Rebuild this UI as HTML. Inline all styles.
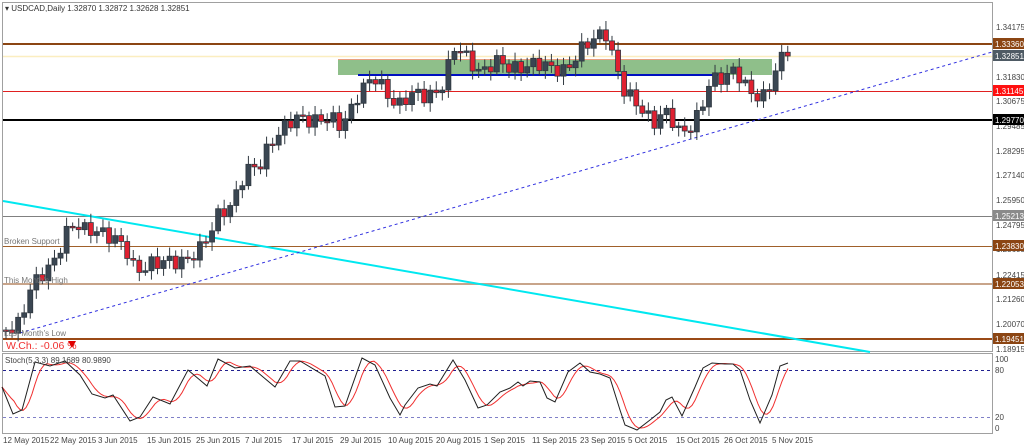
<!DOCTYPE html>
<html><head><meta charset="utf-8"><style>
html,body{margin:0;padding:0;background:#fff;width:1024px;height:447px;overflow:hidden}
svg{display:block;font-family:"Liberation Sans",sans-serif}
</style></head><body>
<svg id="s" width="1024" height="447" viewBox="0 0 1024 447" xmlns="http://www.w3.org/2000/svg">
<rect x="0" y="0" width="1024" height="447" fill="#fff"/>
<rect x="2.5" y="2.5" width="990" height="349" fill="none" stroke="#a0a0a0"/>
<rect x="2.5" y="353.5" width="990" height="80" fill="none" stroke="#a0a0a0"/>
<rect x="338" y="59" width="434" height="16" fill="#8fbf8a"/>
<line x1="338" y1="59.5" x2="724" y2="59.5" stroke="#e8a080" stroke-width="1"/>
<line x1="358" y1="75" x2="718" y2="75" stroke="#0010c0" stroke-width="2"/>
<line x1="3" y1="44" x2="992" y2="44" stroke="#8b4513" stroke-width="2"/>
<line x1="3" y1="56.5" x2="992" y2="56.5" stroke="#fbeec0" stroke-width="1.5"/>
<line x1="3" y1="91.5" x2="992" y2="91.5" stroke="#e02020" stroke-width="1"/>
<line x1="3" y1="120" x2="992" y2="120" stroke="#000" stroke-width="2"/>
<line x1="3" y1="216.5" x2="992" y2="216.5" stroke="#808080" stroke-width="1"/>
<line x1="3" y1="246.5" x2="992" y2="246.5" stroke="#a0602a" stroke-width="1"/>
<line x1="3" y1="284" x2="992" y2="284" stroke="#c8a48a" stroke-width="2"/>
<line x1="3" y1="339" x2="992" y2="339" stroke="#9a4a16" stroke-width="2"/>
<line x1="3" y1="201" x2="870" y2="352" stroke="#00e8f0" stroke-width="2"/>
<line x1="20" y1="333" x2="992" y2="52" stroke="#3030e0" stroke-width="1" stroke-dasharray="3,3"/>
<g id="candles"></g>
<text x="5" y="11" font-size="8" fill="#333">▾ USDCAD,Daily  1.32870 1.32872 1.32628 1.32851</text>
<text x="4" y="244" font-size="8" fill="#777">Broken Support</text>
<text x="4" y="283" font-size="8" fill="#777">This Month's High</text>
<text x="4" y="336" font-size="8" fill="#777">Last Month's Low</text>
<text x="6" y="349" font-size="10.5" fill="#f03030">W.Ch.: -0.06 %</text>
<polygon points="68,341 76,341 72,348" fill="#e00000"/>
<g font-size="8" fill="#444">
<text x="996" y="30">1.34175</text>
<text x="996" y="80">1.31830</text>
<text x="996" y="104">1.30675</text>
<text x="996" y="129">1.29485</text>
<text x="996" y="154">1.28295</text>
<text x="996" y="178">1.27140</text>
<text x="996" y="203">1.25950</text>
<text x="996" y="228">1.24795</text>
<text x="996" y="252">1.23605</text>
<text x="996" y="278">1.22415</text>
<text x="996" y="302">1.21260</text>
<text x="996" y="327">1.20070</text>
<text x="996" y="352">1.18915</text>
</g>
<g font-size="8" fill="#fff">
<rect x="993" y="38" width="31" height="11" fill="#8b4513"/><text x="995" y="47">1.33360</text>
<rect x="993" y="50" width="31" height="11" fill="#4e5a64"/><text x="995" y="59">1.32851</text>
<rect x="993" y="85" width="31" height="11" fill="#ff1010"/><text x="995" y="94">1.31145</text>
<rect x="993" y="114" width="31" height="11" fill="#000"/><text x="995" y="123">1.29770</text>
<rect x="993" y="210" width="31" height="11" fill="#8a8a8a"/><text x="995" y="219">1.25213</text>
<rect x="993" y="240" width="31" height="11" fill="#8b4513"/><text x="995" y="249">1.23830</text>
<rect x="993" y="278" width="31" height="11" fill="#8b4513"/><text x="995" y="287">1.22053</text>
<rect x="993" y="333" width="31" height="11" fill="#8b4513"/><text x="995" y="342">1.19451</text>
</g>
<line x1="3" y1="370.5" x2="992" y2="370.5" stroke="#202090" stroke-dasharray="3,3"/>
<line x1="3" y1="417.5" x2="992" y2="417.5" stroke="#8080c8" stroke-dasharray="3,3"/>
<g id="stoch"></g>
<text x="5" y="363" font-size="8" fill="#444">Stoch(5,3,3) 89.1689 80.9890</text>
<g font-size="8" fill="#444">
<text x="995" y="362">100</text><text x="995" y="373">80</text><text x="995" y="420">20</text><text x="995" y="431">0</text>
</g>
<g font-size="8" fill="#444">
<text x="3" y="443">12 May 2015</text>
<text x="50" y="443">22 May 2015</text>
<text x="98" y="443">3 Jun 2015</text>
<text x="147" y="443">15 Jun 2015</text>
<text x="196" y="443">25 Jun 2015</text>
<text x="245" y="443">7 Jul 2015</text>
<text x="292" y="443">17 Jul 2015</text>
<text x="340" y="443">29 Jul 2015</text>
<text x="388" y="443">10 Aug 2015</text>
<text x="436" y="443">20 Aug 2015</text>
<text x="484" y="443">1 Sep 2015</text>
<text x="532" y="443">11 Sep 2015</text>
<text x="580" y="443">23 Sep 2015</text>
<text x="628" y="443">5 Oct 2015</text>
<text x="676" y="443">15 Oct 2015</text>
<text x="724" y="443">26 Oct 2015</text>
<text x="772" y="443">5 Nov 2015</text>
</g>
</svg>
<script>
(function(){
function interp(k,x){for(var i=0;i<k.length-1;i++){if(x<=k[i+1][0]){var a=k[i],b=k[i+1];return a[1]+(b[1]-a[1])*(x-a[0])/(b[0]-a[0]);}}return k[k.length-1][1];}
var K=[[6,330],[20,320],[30,290],[40,280],[55,258],[65,232],[75,226],[85,232],[100,228],[110,236],[125,250],[135,270],[150,262],[160,265],[175,262],[185,258],[200,250],[210,236],[220,210],[230,205],[245,175],[260,165],[270,140],[285,128],[300,118],[315,118],[330,120],[340,128],[350,110],[360,88],[375,80],[390,98],[400,102],[410,95],[425,98],[440,88],[455,48],[465,58],[480,70],[495,62],[510,70],[530,62],[550,70],[565,68],[580,52],[595,40],[605,28],[615,62],[625,95],[640,108],[655,120],[665,112],[680,135],[690,125],[700,110],[710,84],[725,78],[735,65],[745,85],[755,100],[765,98],[772,78],[780,55],[788,56]];
var g=document.getElementById('candles'),h='';
var prev=330;
for(var i=0;i<=129;i++){
 var x=6+i*6.06;
 var c=interp(K,x)+Math.sin(i*2.3)*7+Math.sin(i*0.9)*3;
 if(i==129)c=56;
 var o=prev, top=Math.min(o,c), bot=Math.max(o,c);
 var wt=top-3-Math.abs(Math.sin(i*1.7))*6, wb=bot+3+Math.abs(Math.cos(i*1.3))*6;
 var bull=c<o;
 h+='<line x1="'+x+'" y1="'+wt+'" x2="'+x+'" y2="'+wb+'" stroke="#303840"/>';
 var bh=Math.max(bot-top,1.5);
 h+='<rect x="'+(x-2.5)+'" y="'+top+'" width="5" height="'+bh+'" fill="'+(bull?'#3a4652':'#e02030')+'" stroke="#303840" stroke-width="0.8"/>';
 prev=c;
}
g.innerHTML=h;
var S=[[2,387],[13,414],[22,410],[35,362],[50,366],[65,361],[80,375],[92,394],[105,398],[113,395],[130,421],[140,417],[153,397],[170,404],[188,370],[207,386],[218,359],[235,368],[250,366],[275,387],[290,361],[300,361],[325,376],[335,407],[345,406],[362,358],[375,365],[390,398],[400,415],[405,405],[418,388],[430,384],[437,386],[453,360],[465,380],[478,408],[487,405],[500,392],[510,388],[518,382],[523,386],[530,381],[540,382],[547,398],[555,402],[568,372],[580,363],[590,372],[600,374],[610,378],[620,410],[625,425],[637,430],[650,420],[660,412],[666,400],[672,397],[682,416],[695,387],[703,368],[712,363],[725,364],[733,364],[740,370],[750,400],[760,423],[772,395],[780,366],[788,363]];
var pb=S.map(function(p){return p.join(',')}).join(' ');
var pts=[];for(var x=2;x<=788;x+=3){pts.push([x,interp(S,x)]);}
var red=[];for(var j=0;j<pts.length;j++){var s=0,n=0;for(var k=Math.max(0,j-4);k<=j;k++){s+=pts[k][1];n++;}red.push(pts[j][0]+','+(s/n).toFixed(1));}
document.getElementById('stoch').innerHTML='<polyline points="'+red.join(' ')+'" fill="none" stroke="#f03030" stroke-width="1"/><polyline points="'+pb+'" fill="none" stroke="#202020" stroke-width="1"/>';
})();
</script>
</body></html>
